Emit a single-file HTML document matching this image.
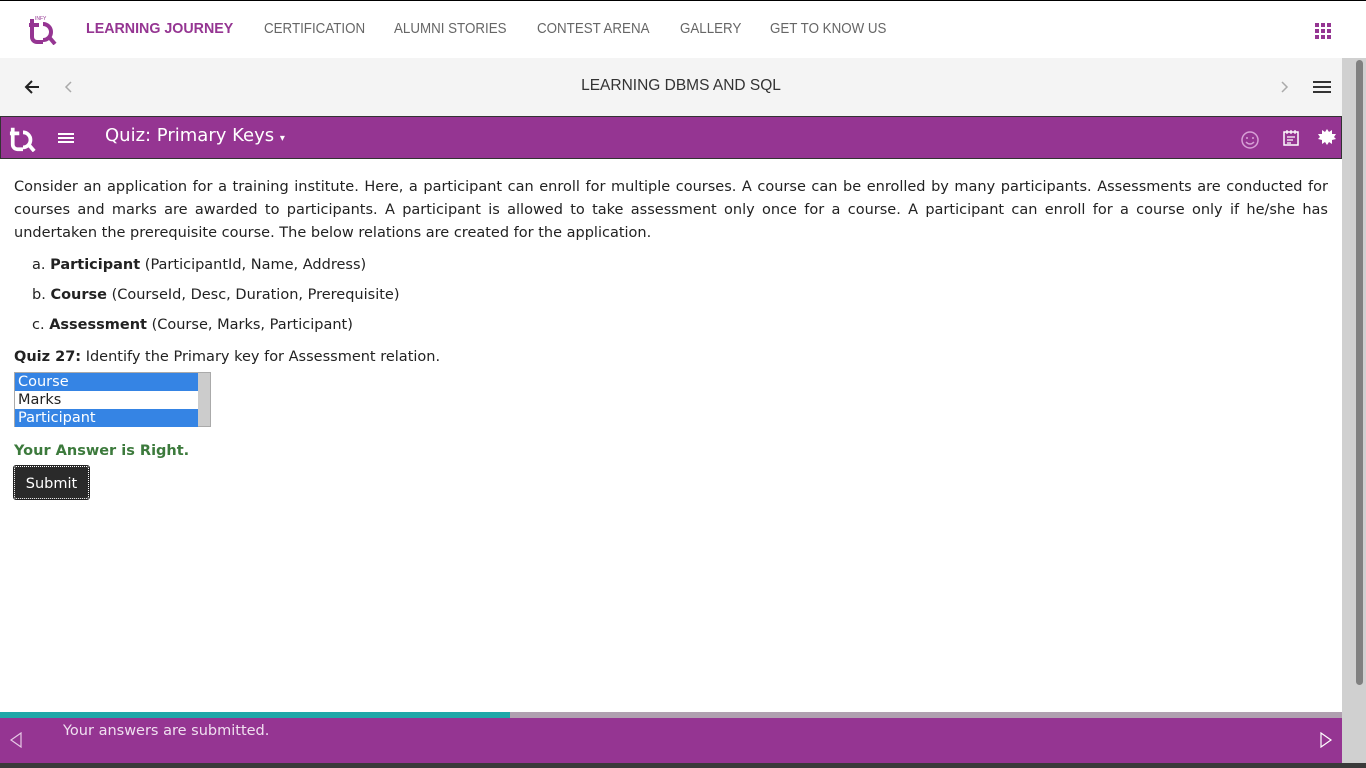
<!DOCTYPE html>
<html><head><meta charset="utf-8"><style>
*{margin:0;padding:0;box-sizing:border-box}
body{width:1366px;height:768px;overflow:hidden;background:#fff;font-family:"DejaVu Sans","Liberation Sans",sans-serif;position:relative}
.top{position:absolute;left:0;top:0;width:1366px;height:58px;border-top:1px solid #000;background:#fff}
.nav{position:absolute;top:19px;font-family:"Liberation Sans",sans-serif;font-size:15px;color:#666;transform:scaleX(0.89);transform-origin:left;white-space:nowrap}
.bar{position:absolute;left:0;top:58px;width:1342px;height:58px;background:#f4f4f4}
.sb{position:absolute;left:1342px;top:58px;width:24px;height:710px;background:#d0d0d0}
.sb div{position:absolute;left:14px;top:2px;width:7px;height:625px;background:#808080;border-radius:4px}
.pb{position:absolute;left:0;top:116px;width:1342px;height:43px;background:#953592;border:1px solid #333}
.c{position:absolute;left:14px;font-size:14.5px;color:#222;line-height:23px}
b{font-weight:bold}
</style></head><body>
<div class="top">
<svg style="position:absolute;left:27px;top:14px" width="32" height="30" viewBox="0 0 32 30"><path d="M5 4v18a5 5 0 0 0 5 5h6M2 10h10" stroke="#953592" stroke-width="4" fill="none"/><path d="M16 9a8 8 0 1 1 0 16" stroke="#953592" stroke-width="4" fill="none"/><path d="M22 22l6 7" stroke="#953592" stroke-width="4"/><text x="8" y="5" font-size="5" fill="#953592" font-family="Liberation Sans">INFY</text></svg>
<div class="nav" style="left:86px;color:#953592;font-weight:bold;transform:scaleX(0.95)">LEARNING JOURNEY</div>
<div class="nav" style="left:264px">CERTIFICATION</div>
<div class="nav" style="left:394px">ALUMNI STORIES</div>
<div class="nav" style="left:537px">CONTEST ARENA</div>
<div class="nav" style="left:680px">GALLERY</div>
<div class="nav" style="left:770px">GET TO KNOW US</div>
<svg style="position:absolute;left:1315px;top:22px" width="16" height="16"><g fill="#953592"><rect x="0" y="0" width="4" height="4"/><rect x="6" y="0" width="4" height="4"/><rect x="12" y="0" width="4" height="4"/><rect x="0" y="6" width="4" height="4"/><rect x="6" y="6" width="4" height="4"/><rect x="12" y="6" width="4" height="4"/><rect x="0" y="12" width="4" height="4"/><rect x="6" y="12" width="4" height="4"/><rect x="12" y="12" width="4" height="4"/></g></svg>
</div>
<div class="bar">
<svg style="position:absolute;left:24px;top:21px" width="16" height="16"><path d="M15 8H2M8 2L2 8l6 6" stroke="#222" stroke-width="2" fill="none"/></svg>
<svg style="position:absolute;left:63px;top:22px" width="10" height="14"><path d="M8 2L3 7l5 5" stroke="#aaa" stroke-width="1.5" fill="none"/></svg>
<div style="position:absolute;left:0;width:1362px;top:19px;text-align:center;font-family:'Liberation Sans',sans-serif;font-size:15.5px;color:#333">LEARNING DBMS AND SQL</div>
<svg style="position:absolute;left:1280px;top:22px" width="10" height="14"><path d="M2 2l5 5-5 5" stroke="#aaa" stroke-width="1.5" fill="none"/></svg>
<svg style="position:absolute;left:1313px;top:22px" width="18" height="14"><path d="M0 2h18M0 7h18M0 12h18" stroke="#333" stroke-width="2"/></svg>
</div>
<div class="sb"><div></div></div>
<div class="pb">
<svg style="position:absolute;left:7px;top:7px" width="30" height="28" viewBox="0 0 32 30"><path d="M5 4v18a5 5 0 0 0 5 5h6M2 10h10" stroke="#fff" stroke-width="4" fill="none"/><path d="M16 9a8 8 0 1 1 0 16" stroke="#fff" stroke-width="4" fill="none"/><path d="M22 22l6 7" stroke="#fff" stroke-width="4"/></svg>
<svg style="position:absolute;left:57px;top:15px" width="16" height="12"><path d="M0 2h16M0 6h16M0 10h16" stroke="#fff" stroke-width="2"/></svg>
<div style="position:absolute;left:104px;top:8px;font-size:18px;color:#fff">Quiz: Primary Keys <span style="font-size:10px">▾</span></div>
<svg style="position:absolute;left:1239px;top:13px" width="20" height="20"><circle cx="10" cy="10" r="8" stroke="#d7a0d6" stroke-width="1.5" fill="none"/><circle cx="7" cy="8" r="1" fill="#d7a0d6"/><circle cx="13" cy="8" r="1" fill="#d7a0d6"/><path d="M6 12q4 4 8 0" stroke="#d7a0d6" stroke-width="1.5" fill="none"/></svg>
<svg style="position:absolute;left:1281px;top:12px" width="18" height="18"><rect x="2" y="3" width="14" height="13" stroke="#fff" stroke-width="1.5" fill="none"/><path d="M5 1v4M9 1v4M13 1v4M5 8h8M5 11h6M5 14h4" stroke="#fff" stroke-width="1.2"/></svg>
<svg style="position:absolute;left:1317px;top:12px" width="18" height="18" viewBox="0 0 18 18"><path d="M9 0l2 3 3-2 0 4 4 0-2 3 2 2-4 1 0 4-3-2-2 3-2-3-3 2 0-4-4-1 2-2-2-3 4 0 0-4 3 2z" fill="#fff"/></svg>
</div>
<div class="c" style="top:176px;width:1314px;text-align:justify">Consider an application for a training institute. Here, a participant can enroll for multiple courses. A course can be enrolled by many participants. Assessments are conducted for courses and marks are awarded to participants. A participant is allowed to take assessment only once for a course. A participant can enroll for a course only if he/she has undertaken the prerequisite course. The below relations are created for the application.</div>
<div class="c" style="left:32px;top:254px">a. <b>Participant</b> (ParticipantId, Name, Address)</div>
<div class="c" style="left:32px;top:284px">b. <b>Course</b> (CourseId, Desc, Duration, Prerequisite)</div>
<div class="c" style="left:32px;top:314px">c. <b>Assessment</b> (Course, Marks, Participant)</div>
<div class="c" style="top:346px"><b>Quiz 27:</b> Identify the Primary key for Assessment relation.</div>
<div style="position:absolute;left:14px;top:372px;width:197px;height:55px;border:1px solid #aaa;background:#fff;font-size:14.5px;line-height:18px">
<div style="width:183px;background:#3584e4;color:#fff;padding-left:3px">Course</div>
<div style="width:183px;color:#222;padding-left:3px">Marks</div>
<div style="width:183px;background:#3584e4;color:#fff;padding-left:3px">Participant</div>
<div style="position:absolute;right:0;top:0;width:12px;height:53px;background:#ccc"></div>
</div>
<div class="c" style="top:440px;color:#3c7a3c;font-weight:bold">Your Answer is Right.</div>
<div style="position:absolute;left:14px;top:466px;width:75px;height:33px;background:#2a2a2a;border:1px dotted #fff;outline:1px solid #222;color:#fff;font-size:14.5px;text-align:center;line-height:31px;border-radius:2px;padding-top:2px">Submit</div>
<div style="position:absolute;left:0;top:712px;width:510px;height:6px;background:#1fa8a8"></div>
<div style="position:absolute;left:510px;top:712px;width:832px;height:6px;background:#b0a0b0"></div>
<div style="position:absolute;left:0;top:718px;width:1342px;height:45px;background:#953592">
<svg style="position:absolute;left:9px;top:14px" width="14" height="16"><path d="M12 1L2 8l10 7z" stroke="#e6c8e6" stroke-width="1.2" fill="none"/></svg>
<div style="position:absolute;left:63px;top:5px;font-size:14.5px;color:#f0e0f0">Your answers are submitted.</div>
<svg style="position:absolute;left:1319px;top:14px" width="14" height="16"><path d="M2 1l10 7-10 7z" stroke="#fff" stroke-width="1.2" fill="none"/></svg>
</div>
<div style="position:absolute;left:0;top:763px;width:1366px;height:5px;background:#3a3a3a"></div>
</body></html>
